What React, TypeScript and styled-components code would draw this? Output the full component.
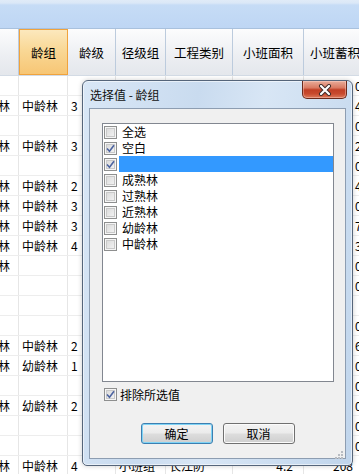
import React from "react";
import styled, { createGlobalStyle, css } from "styled-components";

const GlobalStyle = createGlobalStyle`
  html, body {
    margin: 0;
    padding: 0;
    background: #fff;
  }
  body {
    font-family: "Noto Sans CJK SC", "Noto Sans", sans-serif;
    font-size: 12px;
    color: #000;
  }
`;

const colWidths = [19, 49, 48, 50, 67, 71, 80];
const gridTemplate = colWidths.map((w) => `${w}px`).join(" ");

const Page = styled.div`
  position: relative;
  width: 359px;
  height: 474px;
  overflow: hidden;
  background: #fff;
`;

const TopBar = styled.div`
  height: 28px;
  background: linear-gradient(#e0ebf8 0, #dbe8f7 3px, #c6dcf6 5px, #bed6f4 100%);
  border-bottom: 1px solid #a9c1dd;
`;

const HeaderRow = styled.div`
  display: grid;
  grid-template-columns: ${gridTemplate};
  height: 47px;
  box-sizing: border-box;
  background: linear-gradient(#fcfcfd, #eceef2 60%, #e4e7ec);
  border-bottom: 1px solid #d3dbe5;
`;

const HeaderCell = styled.div<{ $active?: boolean; $start?: boolean }>`
  display: flex;
  align-items: center;
  justify-content: ${(p) => (p.$start ? "flex-start" : "center")};
  padding-left: ${(p) => (p.$start ? 6 : 0)}px;
  box-sizing: border-box;
  border-right: 1px solid #bccbdd;
  white-space: nowrap;
  overflow: hidden;
  font-size: 12.5px;
  ${(p) =>
    p.$active &&
    css`
      background: linear-gradient(#fce8bd, #f9d896 45%, #f7c675);
      border: 1px solid #f0a33d;
    `}
`;

const Row = styled.div`
  display: grid;
  grid-template-columns: ${gridTemplate};
  height: 20px;
  box-sizing: border-box;
  border-bottom: 1px solid #ededed;
`;

const Cell = styled.div<{ $align?: "left" | "right" | "tail"; $lead?: number }>`
  display: flex;
  align-items: center;
  overflow: hidden;
  white-space: nowrap;
  box-sizing: border-box;
  border-right: 1px solid #e6e6e6;
  padding-left: ${(p) => (p.$lead !== undefined ? p.$lead : 3)}px;
  padding-right: ${(p) => (p.$align === "right" ? 10 : p.$align === "tail" ? 8 : 0)}px;
  justify-content: ${(p) => (p.$align === "left" || !p.$align ? "flex-start" : "flex-end")};
`;

const Dialog = styled.div`
  position: absolute;
  left: 82px;
  top: 80px;
  width: 271px;
  height: 386px;
  box-sizing: border-box;
  border: 1px solid #55657a;
  border-radius: 6px 6px 5px 5px;
  background: linear-gradient(100deg, #d9e7f6 0%, #c9dbef 35%, #d8e6f5 55%, #c0d5ec 100%);
  box-shadow: inset 0 0 0 1px rgba(255, 255, 255, 0.55), 0 0 5px rgba(0, 0, 0, 0.2);
  display: flex;
  flex-direction: column;
  padding: 0 6px 6px;
`;

const TitleBar = styled.div`
  display: flex;
  justify-content: space-between;
  align-items: flex-start;
  height: 27px;
  flex-shrink: 0;
`;

const Title = styled.div`
  margin-top: 6px;
  margin-left: 1px;
  line-height: 16px;
  font-size: 12px;
  color: #111;
`;

const CloseButton = styled.div`
  width: 45px;
  height: 18px;
  margin-right: -1px;
  box-sizing: border-box;
  border: 1px solid #6b2a1c;
  border-top: none;
  border-radius: 0 0 5px 5px;
  background: linear-gradient(#e9ac9a 0%, #d97a62 40%, #c13f25 52%, #c84a2e 75%, #dd7a5c 100%);
  box-shadow: inset 0 0 0 1px rgba(255, 220, 210, 0.4);
  display: flex;
  align-items: center;
  justify-content: center;
`;

const Client = styled.div`
  position: relative;
  flex: 1;
  display: flex;
  flex-direction: column;
  background: #f0f0f0;
  border: 1px solid #8d9db1;
`;

const ListBox = styled.div`
  width: 232px;
  height: 259px;
  margin: 14px 0 0 12px;
  box-sizing: border-box;
  border: 1px solid #828790;
  background: #fff;
`;

const Item = styled.div`
  display: flex;
  align-items: center;
  height: 16px;
  padding-left: 1px;
`;

const ItemLabel = styled.span<{ $selected?: boolean }>`
  flex: 1;
  height: 16px;
  margin-left: 2px;
  padding-left: 3px;
  line-height: 16px;
  font-size: 12px;
  background: ${(p) => (p.$selected ? "#3399ff" : "transparent")};
  color: ${(p) => (p.$selected ? "#fff" : "#000")};
`;

const Box = styled.span`
  width: 13px;
  height: 13px;
  flex-shrink: 0;
  box-sizing: border-box;
  border: 1px solid #8e8f8f;
  background: linear-gradient(135deg, #d6d6d6, #f7f7f7);
  box-shadow: inset 0 0 0 1px #f5f5f5, inset 0 0 0 2px #c9c9c9;
  display: flex;
  align-items: center;
  justify-content: center;
`;

const ExcludeRow = styled.div`
  display: flex;
  align-items: center;
  height: 16px;
  margin: 4px 0 0 14px;
  gap: 3px;
  font-size: 12px;
`;

const ButtonRow = styled.div`
  display: flex;
  justify-content: center;
  gap: 10px;
  margin-top: 21px;
`;

const Button = styled.button<{ $focused?: boolean }>`
  width: 72px;
  height: 21px;
  padding: 0;
  border-radius: 3px;
  border: 1px solid ${(p) => (p.$focused ? "#3c7fb1" : "#707070")};
  background: linear-gradient(#f3f3f3 0%, #ebebeb 48%, #dddddd 52%, #cfcfcf 100%);
  box-shadow: inset 0 0 0 1px ${(p) => (p.$focused ? "#7fd3f5" : "#fbfbfb")};
  font-family: "Noto Sans CJK SC", sans-serif;
  font-size: 12px;
  line-height: 18px;
  color: #000;
`;

const Grip = styled.div`
  position: absolute;
  right: 1px;
  bottom: 1px;
  width: 11px;
  height: 11px;
`;

const Check = () => (
  <svg width="9" height="9" viewBox="0 0 9 9">
    <path d="M1 4.5 L3.5 7.2 L8 1.3" fill="none" stroke="#4d64a0" strokeWidth="1.6" />
  </svg>
);

const CheckBox = ({ checked }: { checked?: boolean }) => <Box>{checked && <Check />}</Box>;

const headers = ["", "龄组", "龄级", "径级组", "工程类别", "小班面积", "小班蓄积"];

type RowData = { c: string[]; lead?: number };

const blank = (v: string): RowData => ({ c: ["", "", "", "", "", "", v] });
const young = (kind: string, n: string, v: string): RowData => ({
  c: ["中龄林", kind, n, "", "", "", v],
});

const rows: RowData[] = [
  blank("0.35"),
  young("中龄林", "3", "4.12"),
  blank("0.28"),
  young("中龄林", "3", "2.60"),
  blank("0.17"),
  young("中龄林", "2", "4.05"),
  young("中龄林", "3", "0.93"),
  young("中龄林", "3", "7.41"),
  young("中龄林", "4", "3.30"),
  { c: ["中龄林", "", "", "", "", "", "0.52"] },
  blank("0.44"),
  blank(""),
  blank("0.61"),
  young("中龄林", "2", "6.20"),
  young("幼龄林", "1", "0.81"),
  blank("0.27"),
  young("幼龄林", "2", "0.39"),
  blank("0.70"),
  blank("0.15"),
  { c: ["中龄林", "中龄林", "4", "小班组", "长江防", "4.2", "208"], lead: 29 },
];

const options = [
  { label: "全选", checked: false },
  { label: "空白", checked: true },
  { label: "", checked: true, selected: true },
  { label: "成熟林", checked: false },
  { label: "过熟林", checked: false },
  { label: "近熟林", checked: false },
  { label: "幼龄林", checked: false },
  { label: "中龄林", checked: false },
];

const App = () => {
  return (
    <Page>
      <GlobalStyle />
      <TopBar />
      <HeaderRow>
        {headers.map((h, i) => (
          <HeaderCell key={i} $active={i === 1} $start={i === headers.length - 1}>
            {h}
          </HeaderCell>
        ))}
      </HeaderRow>
      {rows.map((r, i) => (
        <Row key={i}>
          <Cell $align="tail" $lead={0}>
            {r.c[0]}
          </Cell>
          <Cell>{r.c[1]}</Cell>
          <Cell>{r.c[2]}</Cell>
          <Cell>{r.c[3]}</Cell>
          <Cell>{r.c[4]}</Cell>
          <Cell $align="right">{r.c[5]}</Cell>
          <Cell $lead={r.lead !== undefined ? r.lead : 51}>{r.c[6]}</Cell>
        </Row>
      ))}

      <Dialog>
        <TitleBar>
          <Title>选择值 - 龄组</Title>
          <CloseButton>
            <svg width="14" height="12" viewBox="0 0 14 12">
              <path d="M3 2 L11 10 M11 2 L3 10" stroke="#3b2a28" strokeWidth="4" strokeLinecap="round" />
              <path d="M3 2 L11 10 M11 2 L3 10" stroke="#fff" strokeWidth="2.2" strokeLinecap="round" />
            </svg>
          </CloseButton>
        </TitleBar>
        <Client>
          <ListBox>
            {options.map((o, i) => (
              <Item key={i}>
                <CheckBox checked={o.checked} />
                <ItemLabel $selected={o.selected}>{o.label}</ItemLabel>
              </Item>
            ))}
          </ListBox>
          <ExcludeRow>
            <CheckBox checked />
            <span>排除所选值</span>
          </ExcludeRow>
          <ButtonRow>
            <Button $focused>确定</Button>
            <Button>取消</Button>
          </ButtonRow>
          <Grip>
            <svg width="11" height="11" viewBox="0 0 11 11">
              {[
                [8, 2],
                [5, 5],
                [8, 5],
                [2, 8],
                [5, 8],
                [8, 8],
              ].map(([x, y], i) => (
                <rect key={i} x={x} y={y} width="2" height="2" fill="#b8bcc2" />
              ))}
            </svg>
          </Grip>
        </Client>
      </Dialog>
    </Page>
  );
};

export default App;
